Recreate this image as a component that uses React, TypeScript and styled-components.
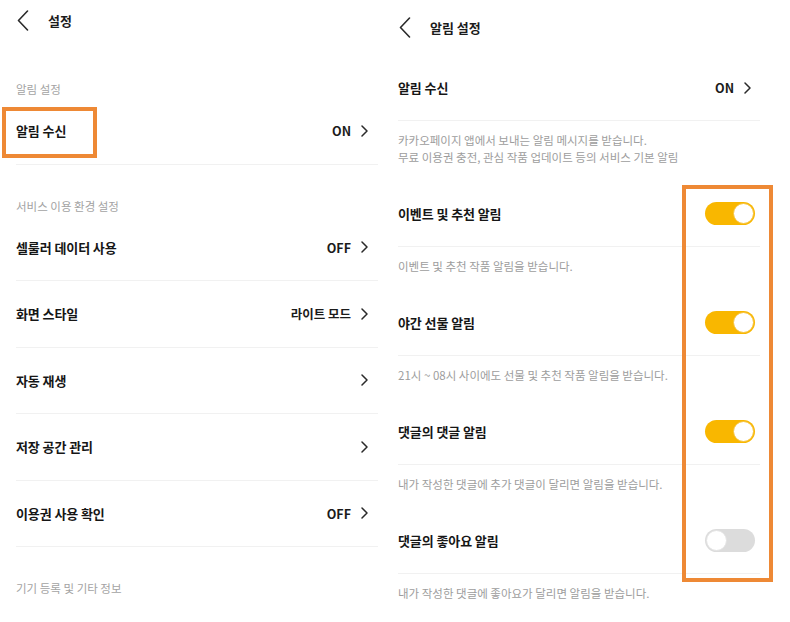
import React from "react";
import styled, { createGlobalStyle } from "styled-components";

const GlobalStyle = createGlobalStyle`
  * {
    box-sizing: border-box;
  }
  body {
    margin: 0;
    background: #fff;
    font-family: "Noto Sans CJK KR", "Noto Sans", sans-serif;
    color: #1b1b1b;
  }
`;

const settingRows = [
  { section: "알림 설정", items: [{ title: "알림 수신", value: "ON" }] },
  {
    section: "서비스 이용 환경 설정",
    items: [
      { title: "셀룰러 데이터 사용", value: "OFF" },
      { title: "화면 스타일", value: "라이트 모드" },
      { title: "자동 재생", value: "" },
      { title: "저장 공간 관리", value: "" },
      { title: "이용권 사용 확인", value: "OFF" },
    ],
  },
];

const alarmRows = [
  { title: "이벤트 및 추천 알림", on: true, desc: "이벤트 및 추천 작품 알림을 받습니다." },
  { title: "야간 선물 알림", on: true, desc: "21시 ~ 08시 사이에도 선물 및 추천 작품 알림을 받습니다." },
  { title: "댓글의 댓글 알림", on: true, desc: "내가 작성한 댓글에 추가 댓글이 달리면 알림을 받습니다." },
  { title: "댓글의 좋아요 알림", on: false, desc: "내가 작성한 댓글에 좋아요가 달리면 알림을 받습니다." },
];

const BackIcon = () => (
  <svg width="12" height="21" viewBox="0 0 12 21" fill="none">
    <path d="M10.5 1 L1.5 10.5 L10.5 20" stroke="#2a2a2a" strokeWidth="1.6" strokeLinecap="round" strokeLinejoin="round" />
  </svg>
);

const Chevron = () => (
  <svg width="7" height="12" viewBox="0 0 7 12" fill="none">
    <path d="M1 1 L6 6 L1 11" stroke="#2a2a2a" strokeWidth="1.5" strokeLinecap="round" strokeLinejoin="round" />
  </svg>
);

const App = (): JSX.Element => {
  return (
    <Page>
      <GlobalStyle />
      <LeftPanel>
        <Header $height={48} $top={10}>
          <BackIcon />
          <span>설정</span>
        </Header>
        {settingRows.map((group) => (
          <React.Fragment key={group.section}>
            <SectionLabel>{group.section}</SectionLabel>
            {group.items.map((item) => (
              <Row key={item.title} $right={10} $height={66.5}>
                <RowTitle>{item.title}</RowTitle>
                <RowValue>
                  {item.value && <span>{item.value}</span>}
                  <Chevron />
                </RowValue>
              </Row>
            ))}
          </React.Fragment>
        ))}
        <SectionLabel>기기 등록 및 기타 정보</SectionLabel>
        <Highlight $left={2} $top={107} $w={95} $h={51} />
      </LeftPanel>

      <RightPanel>
        <Header $height={55} $top={17}>
          <BackIcon />
          <span>알림 설정</span>
        </Header>
        <Row $right={9} $height={66}>
          <RowTitle>알림 수신</RowTitle>
          <RowValue>
            <span>ON</span>
            <Chevron />
          </RowValue>
        </Row>
        <Desc>
          카카오페이지 앱에서 보내는 알림 메시지를 받습니다.
          <br />
          무료 이용권 충전, 관심 작품 업데이트 등의 서비스 기본 알림
        </Desc>
        {alarmRows.map((row) => (
          <React.Fragment key={row.title}>
            <Row $right={5} $height={66}>
              <RowTitle>{row.title}</RowTitle>
              <Toggle $on={row.on}>
                <Knob $on={row.on} />
              </Toggle>
            </Row>
            <Desc>{row.desc}</Desc>
          </React.Fragment>
        ))}
        <Highlight $left={300} $top={185} $w={91} $h={397} />
      </RightPanel>
    </Page>
  );
};

export default App;

const Page = styled.div`
  display: grid;
  grid-template-columns: 382px 408px;
  width: 790px;
  height: 622px;
  overflow: hidden;
  background: #fff;
`;

const LeftPanel = styled.section`
  position: relative;
  padding: 0 4px 0 16px;
`;

const RightPanel = styled.section`
  position: relative;
  padding: 0 30px 0 16px;
`;

const Header = styled.header<{ $height: number; $top: number }>`
  display: flex;
  align-items: flex-start;
  column-gap: 19px;
  height: ${(p) => p.$height}px;
  padding: ${(p) => p.$top}px 0 0 1px;

  svg {
    flex: none;
  }

  span {
    font-size: 13px;
    line-height: 21px;
    font-weight: 700;
    color: #1b1b1b;
  }
`;

const SectionLabel = styled.div`
  height: 50px;
  padding-top: 32px;
  font-size: 11.5px;
  line-height: 18px;
  color: #a3a3a3;
`;

const Row = styled.div<{ $right: number; $height: number }>`
  display: flex;
  align-items: center;
  justify-content: space-between;
  height: ${(p) => p.$height}px;
  padding-right: ${(p) => p.$right}px;
  border-bottom: 1px solid #f1f1f1;
`;

const RowTitle = styled.span`
  font-size: 13px;
  font-weight: 700;
  letter-spacing: -0.1px;
  color: #161616;
`;

const RowValue = styled.div`
  display: flex;
  align-items: center;
  column-gap: 10px;
  font-size: 12.5px;
  font-weight: 700;
  color: #1b1b1b;
`;

const Desc = styled.p`
  margin: 0;
  padding: 11px 0 15px;
  font-size: 11.5px;
  line-height: 17px;
  color: #9d9d9d;
`;

const Toggle = styled.div<{ $on: boolean }>`
  display: flex;
  align-items: center;
  justify-content: ${(p) => (p.$on ? "flex-end" : "flex-start")};
  width: 50px;
  height: 23px;
  padding: 1px;
  border-radius: 12px;
  background: ${(p) => (p.$on ? "#f9b700" : "#dcdcdc")};
`;

const Knob = styled.span<{ $on: boolean }>`
  width: 21px;
  height: 21px;
  border-radius: 50%;
  background: #fff;
  border: 1px solid ${(p) => (p.$on ? "#f6c23a" : "#e3e3e3")};
`;

const Highlight = styled.div<{ $left: number; $top: number; $w: number; $h: number }>`
  position: absolute;
  left: ${(p) => p.$left}px;
  top: ${(p) => p.$top}px;
  width: ${(p) => p.$w}px;
  height: ${(p) => p.$h}px;
  border: 4px solid #ee8935;
  pointer-events: none;
`;
